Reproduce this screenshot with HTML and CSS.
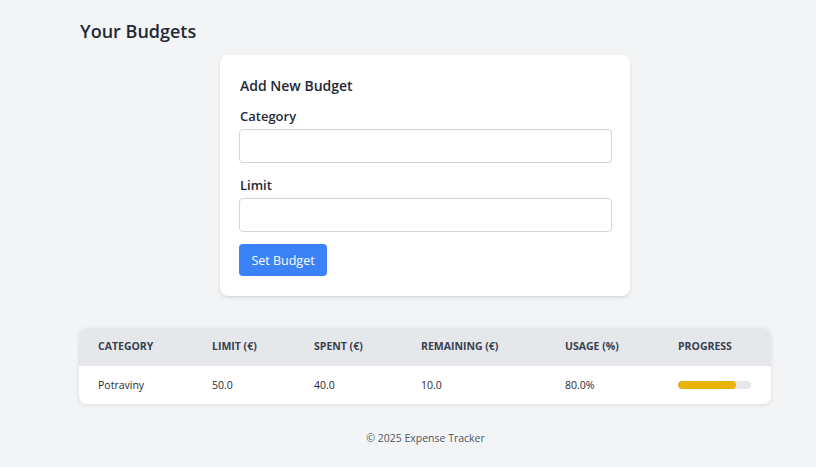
FILE: index.html
```html
<!DOCTYPE html>
<html lang="en">
<head>
<meta charset="utf-8">
<title>Your Budgets</title>
<link rel="stylesheet" href="styles.css">
</head>
<body>
<main class="page">
  <h1 class="page-title">Your Budgets</h1>
  <section class="card">
    <h2 class="card-title">Add New Budget</h2>
    <form class="form">
      <div class="field">
        <label class="label" for="cat">Category</label>
        <input class="input" id="cat" type="text">
      </div>
      <div class="field">
        <label class="label" for="lim">Limit</label>
        <input class="input" id="lim" type="text">
      </div>
      <button class="btn" type="button">Set Budget</button>
    </form>
  </section>
  <div class="table-wrap">
    <table class="table">
      <colgroup>
        <col class="c1"><col class="c2"><col class="c3"><col class="c4"><col class="c5"><col class="c6">
      </colgroup>
      <thead>
        <tr>
          <th>Category</th>
          <th>Limit (€)</th>
          <th>Spent (€)</th>
          <th>Remaining (€)</th>
          <th>Usage (%)</th>
          <th>Progress</th>
        </tr>
      </thead>
      <tbody>
        <tr>
          <td>Potraviny</td>
          <td>50.0</td>
          <td>40.0</td>
          <td>10.0</td>
          <td>80.0%</td>
          <td><div class="bar"><div class="bar-fill" style="width:80%"></div></div></td>
        </tr>
      </tbody>
    </table>
  </div>
  <footer class="footer">© 2025 Expense Tracker</footer>
</main>
</body>
</html>
```
FILE: styles.css
```css
* { box-sizing: border-box; }
html, body { margin: 0; padding: 0; }
body {
  background: #f3f4f6;
  font-family: "Open Sans", "Noto Sans", sans-serif;
  color: #1f2937;
}
.page {
  width: 691px;
  margin-left: 80px;
  padding-top: 17px;
}
.page-title {
  margin: 0;
  font-size: 18px;
  font-weight: 600;
  line-height: 28px;
  color: #1f2937;
}
.card {
  width: 410px;
  margin: 10px 0 0 140px;
  background: #fff;
  border-radius: 8px;
  box-shadow: 0 2px 4px rgba(0,0,0,0.08), 0 1px 2px rgba(0,0,0,0.06);
  padding: 20px 19px 20px 20px;
}
.card-title {
  margin: 0 0 9px;
  font-size: 14px;
  font-weight: 600;
  line-height: 22px;
}
.form { display: flex; flex-direction: column; }
.field { display: flex; flex-direction: column; margin-bottom: 12px; }
.label {
  font-size: 13px;
  font-weight: 600;
  line-height: 20px;
  margin-bottom: 3px;
  color: #1f2937;
}
.input {
  height: 34px;
  width: calc(100% + 2px);
  border: 1px solid #d1d5db;
  border-radius: 4px;
  background: #fff;
  margin-left: -1px;
}
.btn {
  align-self: flex-start;
  margin-left: -1px;
  height: 32px;
  width: 88px;
  background: #3b82f6;
  color: #fff;
  border: none;
  border-radius: 4px;
  font-family: inherit;
  font-size: 12.5px;
}
.table-wrap {
  margin-top: 32px;
  background: #fff;
  border-radius: 8px;
  overflow: hidden;
  box-shadow: 0 1px 4px rgba(0,0,0,0.1);
  margin-left: -1px;
}
.table {
  width: 692px;
  border-collapse: collapse;
  table-layout: fixed;
}
.c1 { width: 114px; }
.c2 { width: 102px; }
.c3 { width: 107px; }
.c4 { width: 144px; }
.c5 { width: 113px; }
.c6 { width: 112px; }
.table th {
  background: #e5e7eb;
  height: 38px;
  text-align: left;
  padding: 0 0 3px 19px;
  font-size: 10.5px;
  font-weight: 700;
  text-transform: uppercase;
  color: #374151;
}
.table td {
  height: 38px;
  padding: 0 0 0 19px;
  font-size: 10.5px;
  color: #1f2937;
}
.bar {
  width: 73px;
  height: 8px;
  background: #e5e7eb;
  border-radius: 4px;
  overflow: hidden;
}
.bar-fill {
  height: 100%;
  background: #eab308;
  border-radius: 4px;
}
.footer {
  margin-top: 27px;
  text-align: center;
  font-size: 10.5px;
  color: #4b5563;
  padding-bottom: 20px;
}
```
